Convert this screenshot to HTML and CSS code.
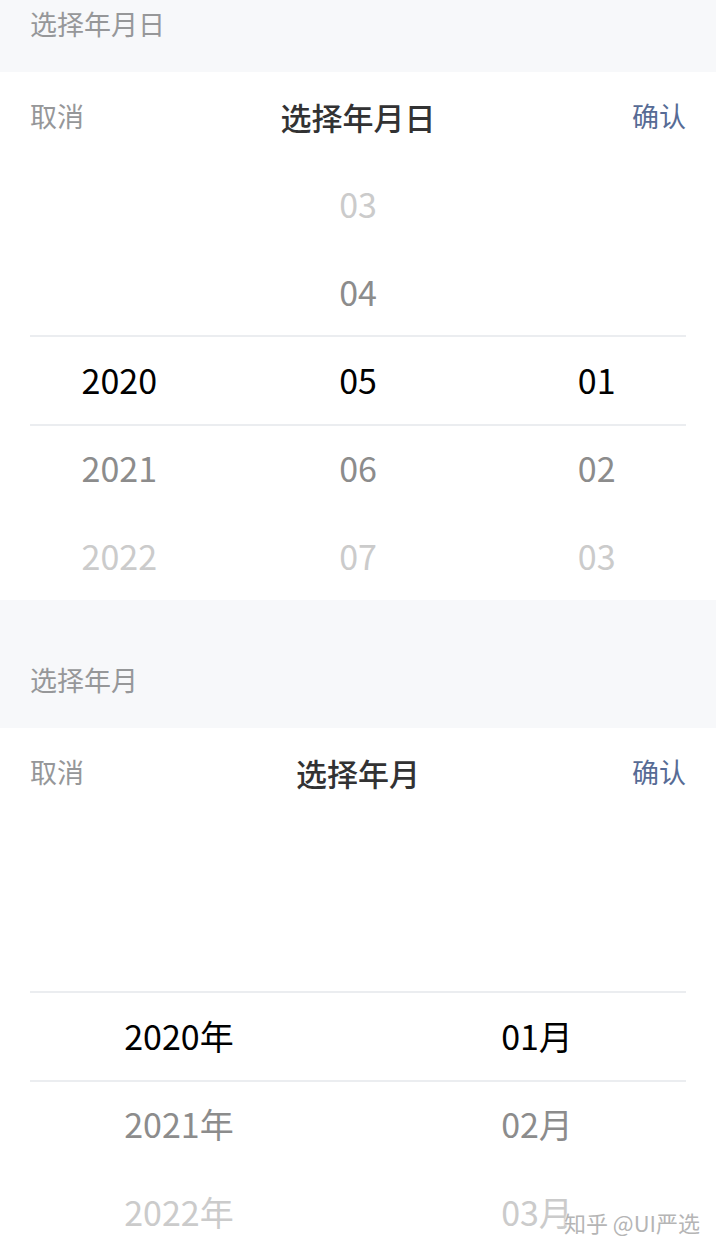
FILE: index.html
```html
<!DOCTYPE html>
<html lang="zh-CN">

<head>
    <meta charset="UTF-8">
    <meta name="viewport" content="width=device-width, initial-scale=1.0">
    <title>DatetimePicker</title>
    <link rel="stylesheet" href="styles.css">
</head>

<body>
    <h2 class="demo-title first">选择年月日</h2>
    <div class="picker">
        <div class="toolbar">
            <button class="btn cancel">取消</button>
            <div class="title">选择年月日</div>
            <button class="btn confirm">确认</button>
        </div>
        <div class="columns">
            <ul class="column">
                <li></li>
                <li></li>
                <li class="selected">2020</li>
                <li class="near">2021</li>
                <li class="far">2022</li>
            </ul>
            <ul class="column">
                <li class="far">03</li>
                <li class="near">04</li>
                <li class="selected">05</li>
                <li class="near">06</li>
                <li class="far">07</li>
            </ul>
            <ul class="column">
                <li></li>
                <li></li>
                <li class="selected">01</li>
                <li class="near">02</li>
                <li class="far">03</li>
            </ul>
            <div class="frame"></div>
        </div>
    </div>

    <h2 class="demo-title">选择年月</h2>
    <div class="picker">
        <div class="toolbar">
            <button class="btn cancel">取消</button>
            <div class="title">选择年月</div>
            <button class="btn confirm">确认</button>
        </div>
        <div class="columns">
            <ul class="column">
                <li></li>
                <li></li>
                <li class="selected">2020年</li>
                <li class="near">2021年</li>
                <li class="far">2022年</li>
            </ul>
            <ul class="column">
                <li></li>
                <li></li>
                <li class="selected">01月</li>
                <li class="near">02月</li>
                <li class="far">03月</li>
            </ul>
            <div class="frame"></div>
        </div>
    </div>

    <div class="watermark">知乎 @UI严选</div>
</body>

</html>
```

FILE: styles.css
```css
body {
    margin: 0;
    background-color: #f7f8fa;
    font-family: "Noto Sans CJK SC", "Noto Sans", sans-serif;
    color: #323233;
    overflow: hidden;
}

.demo-title {
    margin: 0;
    padding: 64px 30px 32px;
    font-size: 27px;
    font-weight: normal;
    line-height: 32px;
    color: #969799;
}

.demo-title.first {
    padding-top: 8px;
}

.picker {
    background-color: #fff;
}

.toolbar {
    display: flex;
    align-items: center;
    justify-content: space-between;
    height: 88px;
    padding: 0 30px;
}

.btn {
    padding: 0;
    border: none;
    background: none;
    font-family: inherit;
    font-size: 27px;
    line-height: 88px;
}

.cancel {
    color: #969799;
}

.confirm {
    color: #576b95;
}

.title {
    font-size: 31px;
    font-weight: 500;
    color: #323233;
}

.columns {
    position: relative;
    display: flex;
}

.column {
    flex: 1;
    margin: 0;
    padding: 0;
    list-style: none;
}

.column li {
    height: 88px;
    line-height: 88px;
    text-align: center;
    font-size: 34px;
    color: #000;
}

.column li.near {
    color: #8c8c8c;
}

.column li.far {
    color: #cbcbcb;
}

/* hairlines around the selected row */
.frame {
    position: absolute;
    left: 30px;
    right: 30px;
    top: 175px;
    height: 87px;
    border-top: 2px solid #ebedf0;
    border-bottom: 2px solid #ebedf0;
    pointer-events: none;
}

.watermark {
    position: absolute;
    right: 16px;
    top: 1206px;
    font-size: 22px;
    color: #b5b5b5;
    text-shadow: 0 0 2px #fff, 0 0 2px #fff;
}
```
